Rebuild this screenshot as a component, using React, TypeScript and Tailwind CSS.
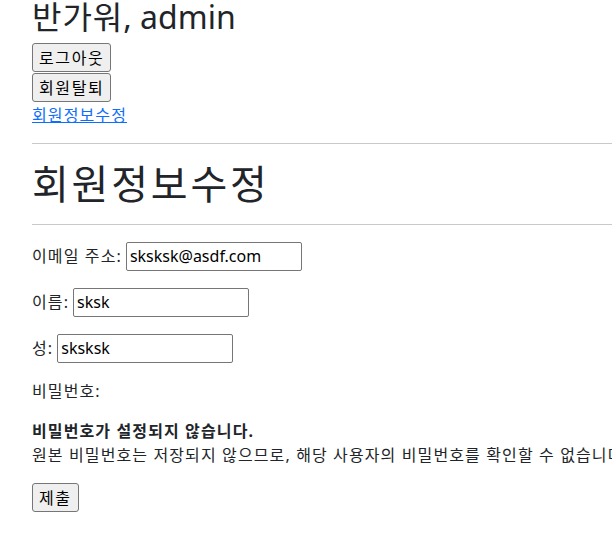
import React from "react";

const font = { fontFamily: '"Noto Sans", "Noto Sans CJK KR", sans-serif' };

function Btn({ children }: { children: React.ReactNode }) {
  return (
    <button
      type="button"
      className="block h-[29px] px-[6px] bg-[#efefef] border border-[#767676] rounded-[3px] text-[16px] leading-[24px] tracking-[0.1em] text-black"
    >
      {children}
    </button>
  );
}

function Field({ label, value, width = "w-[176px]" }: { label: string; value: string; width?: string }) {
  return (
    <div className="flex items-center h-[30px] mb-4">
      <label className="mr-[4px] tracking-[0.07em]">{label}</label>
      <input
        readOnly
        value={value}
        className={`${width} h-[29px] px-[3px] border border-[#767676] rounded-[2px] text-[16px] text-black outline-none`}
      />
    </div>
  );
}

export default function App() {
  return (
    <div className="w-[612px] h-[539px] overflow-hidden bg-white text-[#212529] text-[16px] leading-[24px]" style={font}>
      <div className="pl-8 w-[900px]">
        <h2 className="text-[32px] leading-[34px] mt-0 mb-[9px]">
          <span className="tracking-[0.03em]">반가워</span>, admin
        </h2>
        <Btn>로그아웃</Btn>
        <div className="h-[1px]" />
        <Btn>회원탈퇴</Btn>
        <a href="#" className="block w-fit text-[#0d6efd] underline leading-[24px] mt-[1px] tracking-[0.07em]">회원정보수정</a>
        <hr className="my-4 border-0 border-t border-[#c8c9ca] w-[580px]" />
        <h1 className="text-[40px] leading-[48px] mb-4 tracking-[0.07em]">회원정보수정</h1>
        <hr className="mb-4 border-0 border-t border-[#c8c9ca] w-[580px]" />
        <Field label="이메일 주소:" value="sksksk@asdf.com" />
        <Field label="이름:" value="sksk" />
        <Field label="성:" value="sksksk" />
        <p className="mb-4 tracking-[0.07em]">비밀번호:</p>
        <div className="mb-4 tracking-[0.07em]">
          <p className="font-bold">비밀번호가 설정되지 않습니다.</p>
          <p className="whitespace-nowrap">원본 비밀번호는 저장되지 않으므로, 해당 사용자의 비밀번호를 확인할 수 없습니다.</p>
        </div>
        <Btn>제출</Btn>
      </div>
    </div>
  );
}
